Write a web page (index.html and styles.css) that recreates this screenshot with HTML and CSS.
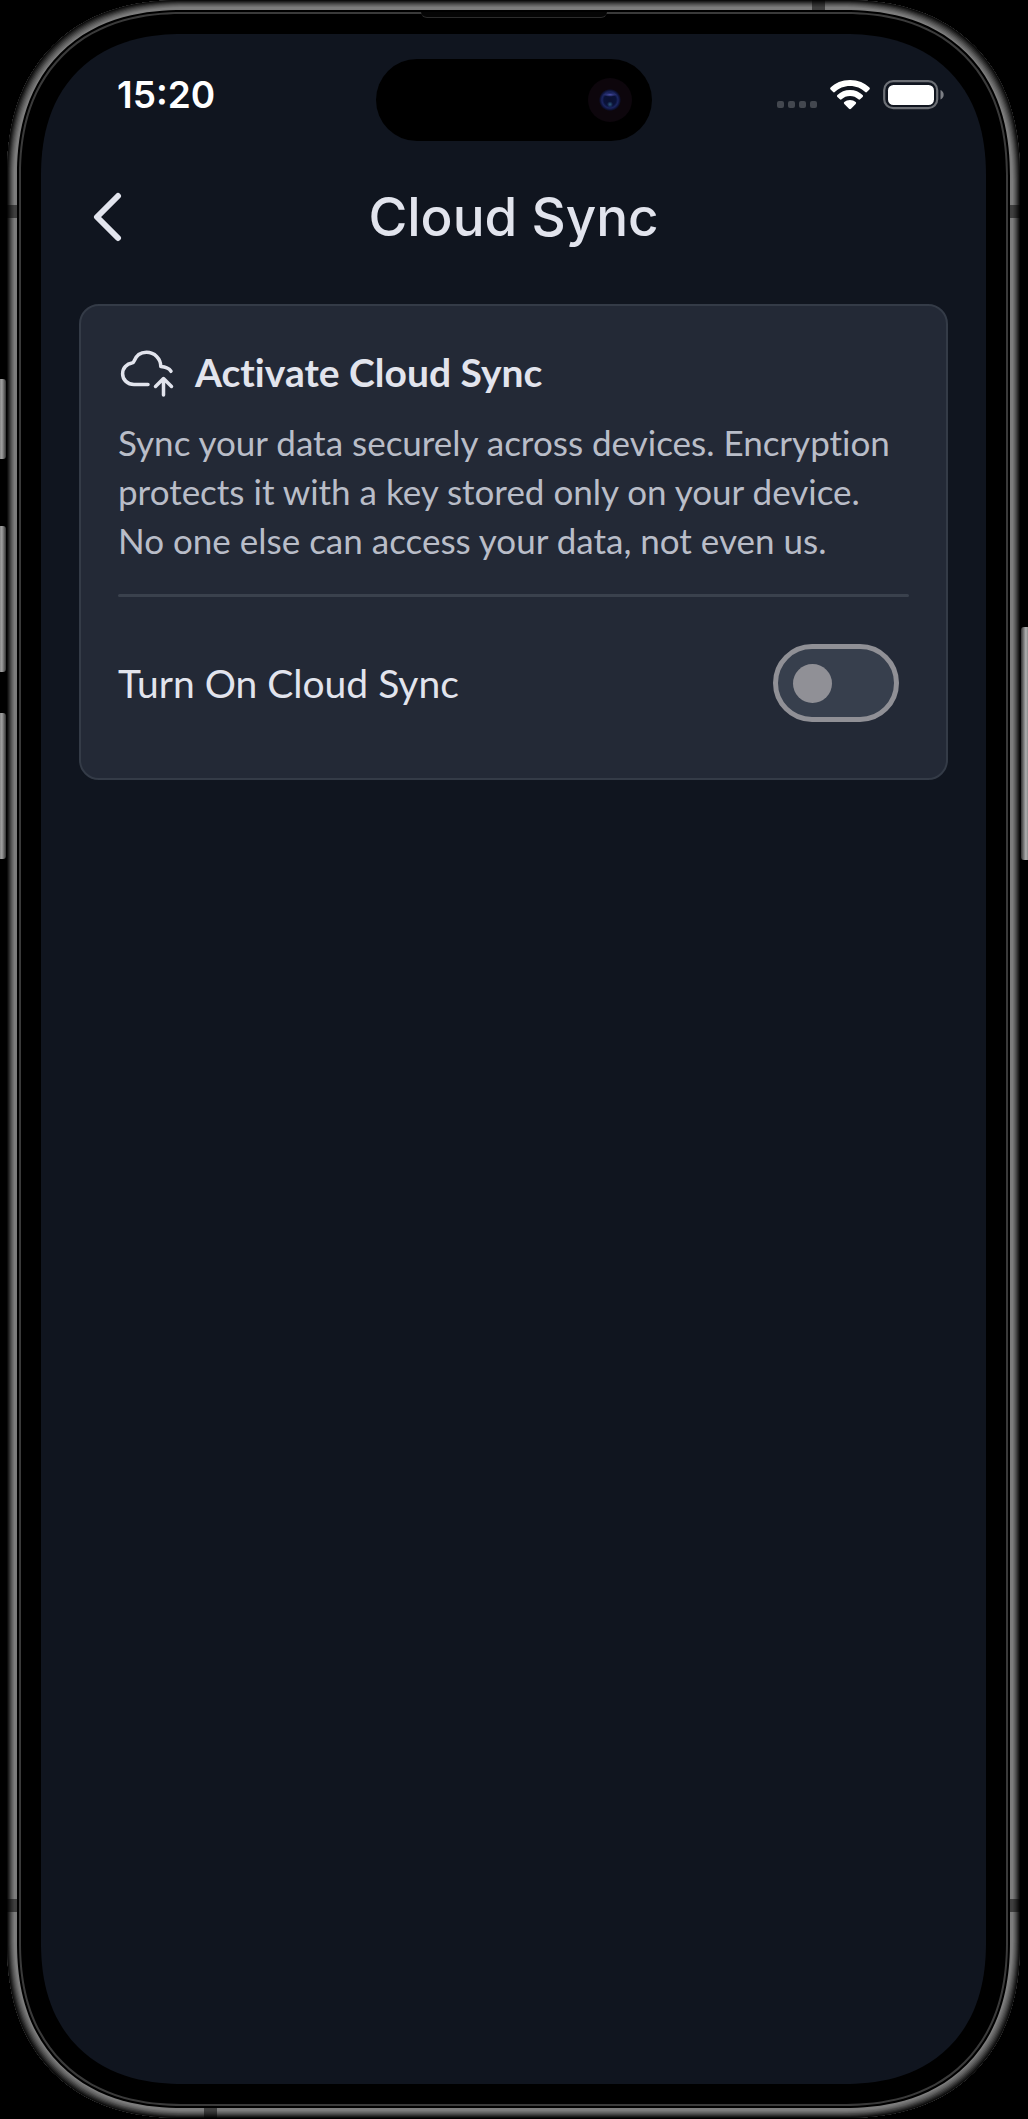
FILE: index.html
```html
<!DOCTYPE html>
<html lang="en">
<head>
  <meta charset="UTF-8">
  <meta name="viewport" content="width=device-width, initial-scale=1.0">
  <title>Cloud Sync</title>
  <link rel="stylesheet" href="styles.css">
</head>
<body>
  <div class="device">
    <!-- Side buttons -->
    <span class="key key-action"></span>
    <span class="key key-volume-up"></span>
    <span class="key key-volume-down"></span>
    <span class="key key-power"></span>

    <!-- Antenna bands -->
    <span class="band band-top"></span>
    <span class="band band-bottom"></span>
    <span class="band band-side band-left-top"></span>
    <span class="band band-side band-left-bottom"></span>
    <span class="band band-side band-right-top"></span>
    <span class="band band-side band-right-bottom"></span>

    <div class="bezel">
      <div class="bezel-inner">
        <span class="earpiece"></span>
        <div class="screen">
          <div class="island"><span class="camera"></span></div>

          <!-- Status bar -->
          <div class="status-bar">
            <div class="status-time">15:20</div>
            <div class="status-icons">
              <div class="signal"><i></i><i></i><i></i><i></i></div>
              <svg class="wifi" width="40" height="30" viewBox="0 0 40 30">
                <path d="M20 0C12 0 5 3 .6 7.600c-.6.6-.6 1.300 0 1.900l2.500 2.500c.5.500 1.200.5 1.700 0C8.700 8.300 14 6 20 6s11.300 2.300 15.200 6c.5.500 1.200.5 1.700 0l2.500-2.500c.6-.6.6-1.300 0-1.900C35 3 28 0 20 0z"/>
                <path d="M20 10c-5 0-9.400 1.900-12.600 5-.6.6-.6 1.300 0 1.900l2.500 2.400c.5.500 1.200.5 1.700 0C13.800 17.200 16.700 16 20 16s6.200 1.200 8.400 3.300c.5.500 1.200.5 1.700 0l2.500-2.400c.6-.6.6-1.300 0-1.900C29.400 11.900 25 10 20 10z"/>
                <path d="M20 20c-2.200 0-4.200.8-5.700 2.100-.6.600-.6 1.200 0 1.800l4.700 4.800c.6.6 1.400.6 2 0l4.700-4.800c.6-.6.6-1.200 0-1.800C24.200 20.800 22.200 20 20 20z"/>
              </svg>
              <svg class="battery" width="62" height="30" viewBox="0 0 62 30">
                <rect x="1.200" y="1.200" width="53" height="27" rx="9" fill="none" stroke="#6c6f75" stroke-width="2.200"/>
                <rect x="5" y="5" width="46" height="20" rx="5.500" fill="#fff"/>
                <path d="M57.500 10v9.500c2-.8 3.200-2.600 3.200-4.700s-1.200-4-3.200-4.800z" fill="#7c7f85"/>
              </svg>
            </div>
          </div>

          <!-- App header -->
          <header class="app-header">
            <button class="back-button" type="button" aria-label="Back">
              <svg width="30" height="50" viewBox="0 0 30 50">
                <path d="M25 4L4 25l21 21"/>
              </svg>
            </button>
            <h1 class="app-title">Cloud Sync</h1>
          </header>

          <!-- Sync card -->
          <main class="card">
            <div class="card-heading">
              <svg class="cloud-icon" width="56" height="50" viewBox="0 0 56 50">
                <path d="M30 37.500H16C9.500 37.500 4.600 32.800 4.600 26.700c0-5.700 4.200-10 9.400-10.700 1 0 1.500-.5 1.900-1.600C18 8.700 22.500 5.300 28.500 5.300c8 0 14.300 6.200 14.300 14.200 3.700.2 8 1.300 10.200 4.800"/>
                <path d="M45.500 48V32M37.500 39.500l8-8 8 8"/>
              </svg>
              <h2 class="card-title">Activate Cloud Sync</h2>
            </div>
            <p class="card-text">Sync your data securely across devices. Encryption protects it with a key stored only on your device. No one else can access your data, not even us.</p>
            <hr class="divider">
            <div class="setting-row">
              <label class="setting-label" for="cloud-sync">Turn On Cloud Sync</label>
              <input class="toggle" type="checkbox" role="switch" id="cloud-sync">
            </div>
          </main>
        </div>
      </div>
    </div>
  </div>
</body>
</html>
```
FILE: styles.css
```css
* {
  box-sizing: border-box;
  margin: 0;
  padding: 0;
}

body {
  min-height: 100vh;
  padding: 0 8px 1px 7px;
  display: flex;
  background: #000;
  color: #e2e4ed;
  font-family: Lato, sans-serif;
  font-variant-ligatures: none;
}

/* Phone frame */
.device {
  position: relative;
  flex: 1;
  display: flex;
  padding: 10px;
  border-radius: 160px;
  background: #7c7c7c;
  box-shadow:
    inset 0 0 0 1px #0c0c0c,
    inset 0 0 0 2px #1e1e1e,
    inset 0 0 0 3px #303030,
    inset 0 0 0 4px #434343,
    inset 0 0 0 5px #545454,
    inset 0 0 0 6px #636363,
    inset 0 0 0 7px #707070;
}

.bezel {
  flex: 1;
  display: flex;
  padding: 2px;
  border-radius: 150px;
  background: #000;
}

.bezel-inner {
  position: relative;
  flex: 1;
  display: flex;
  padding: 20px;
  border: 2px solid #3a3a3a;
  border-radius: 148px;
  background: #000;
}

.screen {
  position: relative;
  flex: 1;
  min-width: 0;
  border-radius: 126px;
  background: #10151f;
}

/* Softer corners where the browser can draw them */
@supports (corner-shape: superellipse(1.2)) {
  .device,
  .bezel,
  .bezel-inner,
  .screen {
    corner-shape: superellipse(1.2);
  }

  .device {
    border-radius: 176px;
  }

  .bezel {
    border-radius: 166px;
  }

  .bezel-inner {
    border-radius: 164px;
  }

  .screen {
    border-radius: 142px;
  }
}

.earpiece {
  position: absolute;
  top: -2px;
  left: 50%;
  width: 186px;
  height: 6px;
  margin-left: -93px;
  border-bottom: 1px solid #2c2c2c;
  border-radius: 0 0 8px 8px;
  background: #050505;
}

/* Side buttons */
.key {
  position: absolute;
  left: -7px;
  width: 6px;
  border-radius: 0 3px 3px 0;
  background: linear-gradient(to right, #888, #a0a0a0 30%, #333);
}

.key-action {
  top: 379px;
  height: 80px;
}

.key-volume-up {
  top: 526px;
  height: 146px;
}

.key-volume-down {
  top: 713px;
  height: 146px;
}

.key-power {
  top: 627px;
  left: auto;
  right: -8px;
  width: 7px;
  height: 233px;
  border-radius: 3px 0 0 3px;
  background: linear-gradient(to left, #888, #b0b0b0 30%, #333);
}

/* Antenna bands */
.band {
  position: absolute;
  width: 13px;
  height: 10px;
  background: rgba(0, 0, 0, 0.5);
}

.band-side {
  width: 10px;
  height: 13px;
}

.band-top {
  top: 0;
  right: 195px;
}

.band-bottom {
  bottom: 0;
  left: 197px;
}

.band-left-top {
  top: 205px;
  left: 0;
}

.band-left-bottom {
  bottom: 206px;
  left: 0;
}

.band-right-top {
  top: 205px;
  right: 0;
}

.band-right-bottom {
  bottom: 206px;
  right: 0;
}

/* Camera island */
.island {
  position: absolute;
  top: 25px;
  left: 50%;
  width: 276px;
  height: 82px;
  margin-left: -138px;
  padding-right: 20px;
  display: flex;
  align-items: center;
  justify-content: flex-end;
  border-radius: 41px;
  background: #000;
}

.camera {
  width: 44px;
  height: 44px;
  border-radius: 50%;
  background:
    radial-gradient(circle at 50% 60%, #2c5a7c 0, transparent 3px),
    radial-gradient(ellipse 7px 2px at 50% 38%, #4a4fa8 0, transparent 100%),
    radial-gradient(circle at 50% 50%, #0a1030 0, #0a1238 6px, #1b2560 8px, #0c1030 10px, #0d060c 11px);
}

/* Status bar */
.status-bar {
  height: 122px;
  padding: 0 41px 0 76px;
  display: flex;
  align-items: center;
  justify-content: space-between;
}

.status-time {
  font: 600 37px/44px Inter, sans-serif;
  color: #fff;
}

.status-icons {
  display: flex;
  align-items: center;
  gap: 13px;
}

.signal {
  padding-bottom: 2px;
  display: flex;
  gap: 4px;
  align-self: flex-end;
}

.signal i {
  width: 7px;
  height: 7px;
  border-radius: 2px;
  background: #43474f;
}

.wifi {
  fill: #fff;
}

/* App header */
.app-header {
  position: relative;
  height: 121px;
  display: flex;
  align-items: center;
  justify-content: center;
}

.back-button {
  position: absolute;
  left: 52px;
  display: flex;
  border: 0;
  background: none;
  cursor: pointer;
}

.back-button path {
  fill: none;
  stroke: #e2e4ed;
  stroke-width: 6;
  stroke-linecap: round;
  stroke-linejoin: round;
}

.app-title {
  font: 500 53px/64px Inter, sans-serif;
}

/* Sync card */
.card {
  margin: 27px 38px 0;
  padding: 38px 37px 56px;
  border: 2px solid #343b47;
  border-radius: 20px;
  background: #232936;
}

.card-heading {
  display: flex;
  align-items: center;
  gap: 21px;
}

.cloud-icon {
  fill: none;
  stroke: #e2e4ed;
  stroke-width: 3.5;
  stroke-linecap: round;
  stroke-linejoin: round;
}

.card-title {
  font-size: 39px;
  line-height: 56px;
  font-weight: 700;
}

.card-text {
  margin-top: 18px;
  font-size: 35px;
  line-height: 49px;
  color: #b9bdc8;
}

.divider {
  height: 3px;
  margin: 29px 0 47px;
  border: 0;
  border-radius: 2px;
  background: #3a414d;
}

.setting-row {
  padding-right: 10px;
  display: flex;
  align-items: center;
  justify-content: space-between;
}

.setting-label {
  font-size: 39px;
  line-height: 48px;
}

.toggle {
  appearance: none;
  width: 126px;
  height: 78px;
  padding-left: 15px;
  display: flex;
  align-items: center;
  border: 5px solid #909096;
  border-radius: 39px;
  background: #373f4d;
  cursor: pointer;
}

.toggle::before {
  content: "";
  width: 39px;
  height: 39px;
  border-radius: 50%;
  background: #909096;
}

.toggle:checked {
  padding-left: 62px;
}
```
